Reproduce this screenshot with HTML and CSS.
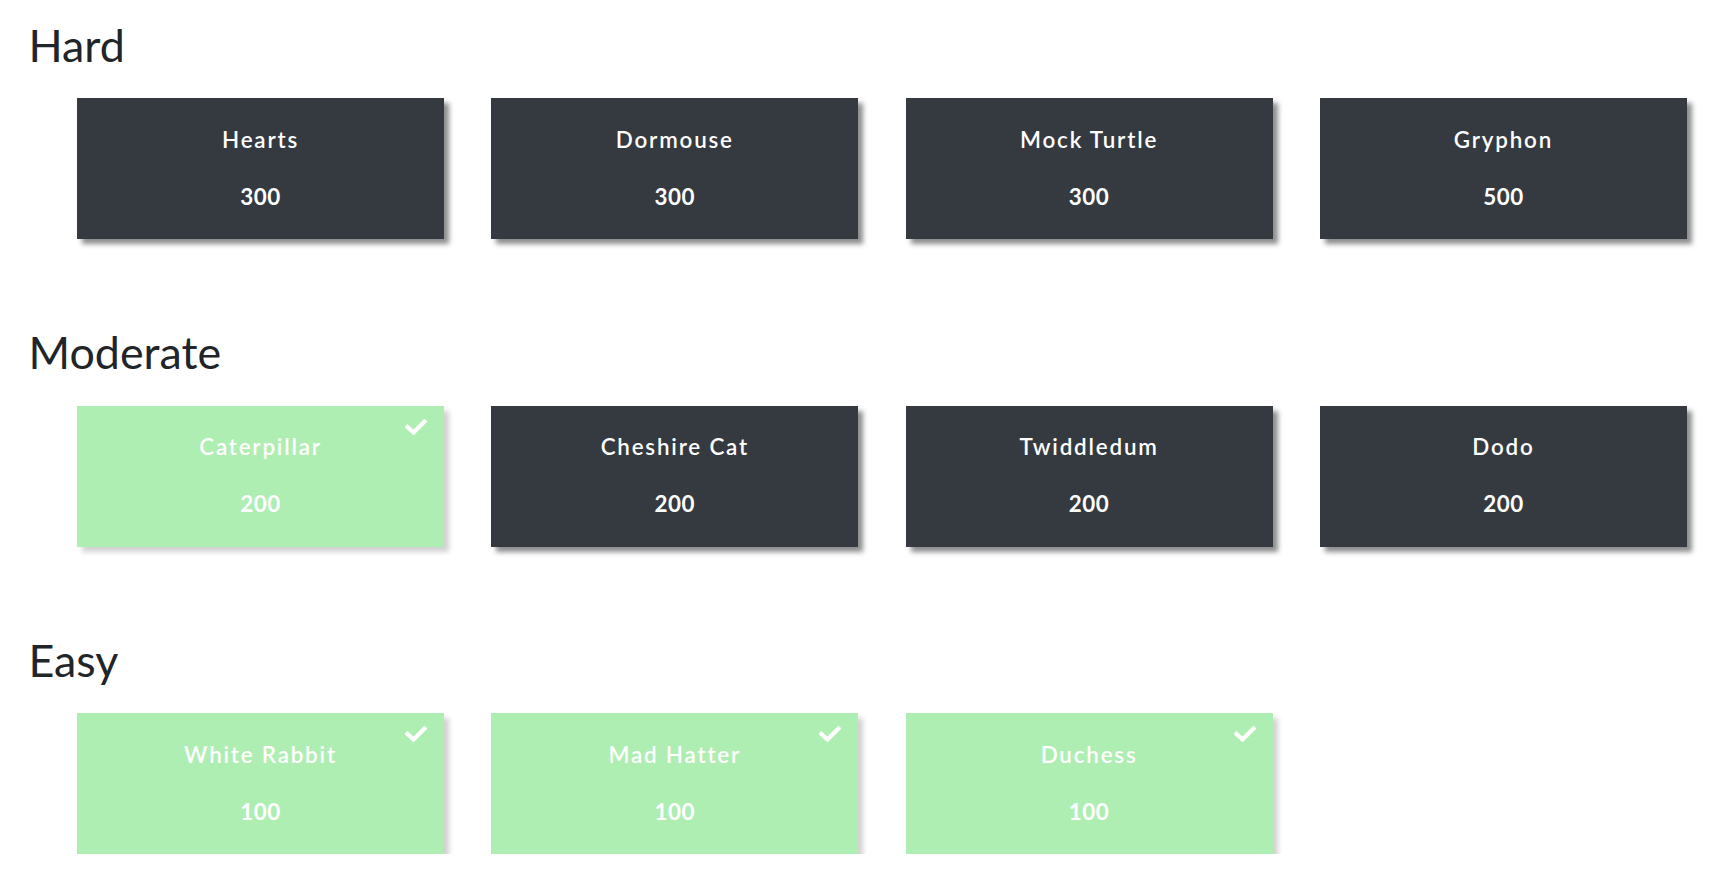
FILE: index.html
```html
<!DOCTYPE html>
<html>
<head>
<meta charset="utf-8">
<link rel="stylesheet" href="styles.css">
</head>
<body>
<section class="category">
  <h2 class="category-title">Hard</h2>
  <div class="cards">
    <div class="card"><div class="card-name">Hearts</div><div class="card-value">300</div></div>
    <div class="card"><div class="card-name">Dormouse</div><div class="card-value">300</div></div>
    <div class="card"><div class="card-name">Mock Turtle</div><div class="card-value">300</div></div>
    <div class="card"><div class="card-name">Gryphon</div><div class="card-value">500</div></div>
  </div>
</section>
<section class="category">
  <h2 class="category-title">Moderate</h2>
  <div class="cards">
    <div class="card solved"><svg class="check" viewBox="0 0 22 16"><polyline points="2.5,8 8.5,13.5 19.5,2.5"/></svg><div class="card-name">Caterpillar</div><div class="card-value">200</div></div>
    <div class="card"><div class="card-name">Cheshire Cat</div><div class="card-value">200</div></div>
    <div class="card"><div class="card-name">Twiddledum</div><div class="card-value">200</div></div>
    <div class="card"><div class="card-name">Dodo</div><div class="card-value">200</div></div>
  </div>
</section>
<section class="category">
  <h2 class="category-title">Easy</h2>
  <div class="cards">
    <div class="card solved"><svg class="check" viewBox="0 0 22 16"><polyline points="2.5,8 8.5,13.5 19.5,2.5"/></svg><div class="card-name">White Rabbit</div><div class="card-value">100</div></div>
    <div class="card solved"><svg class="check" viewBox="0 0 22 16"><polyline points="2.5,8 8.5,13.5 19.5,2.5"/></svg><div class="card-name">Mad Hatter</div><div class="card-value">100</div></div>
    <div class="card solved"><svg class="check" viewBox="0 0 22 16"><polyline points="2.5,8 8.5,13.5 19.5,2.5"/></svg><div class="card-name">Duchess</div><div class="card-value">100</div></div>
  </div>
</section>
</body>
</html>
```
FILE: styles.css
```css
html, body {
  margin: 0;
  padding: 0;
  background: #ffffff;
  font-family: "Lato", "Noto Sans", sans-serif;
}

body {
  padding: 18.8px 0 0 28.5px;
}

.category {
  margin-bottom: 87.5px;
}

.category:last-child {
  margin-bottom: 0;
}

.category-title {
  margin: 0;
  font-size: 44.8px;
  line-height: 1.2;
  font-weight: 400;
  color: #212529;
}

.cards {
  display: flex;
  gap: 47.3px;
  margin-top: 25.4px;
  padding-left: 48.5px;
}

.card {
  position: relative;
  box-sizing: border-box;
  width: 367px;
  height: 141px;
  padding-top: 26.6px;
  background: #343a40;
  color: #ffffff;
  text-align: center;
  box-shadow: 5px 5px 5px rgba(0, 0, 0, 0.45);
}

.card.solved {
  background: #afeeb3;
  box-shadow: 5px 5px 5px rgba(0, 0, 0, 0.18);
}

.card-name,
.card-value {
  font-size: 22.4px;
  line-height: 30px;
  font-weight: 600;
  letter-spacing: 1.8px;
}

.card-value {
  margin-top: 27px;
  font-weight: 700;
  letter-spacing: 0.5px;
}

.check {
  position: absolute;
  top: 13px;
  right: 17px;
  width: 22px;
  height: 16px;
  fill: none;
  stroke: #ffffff;
  stroke-width: 4.2;
  stroke-linecap: square;
  stroke-linejoin: miter;
}
```
